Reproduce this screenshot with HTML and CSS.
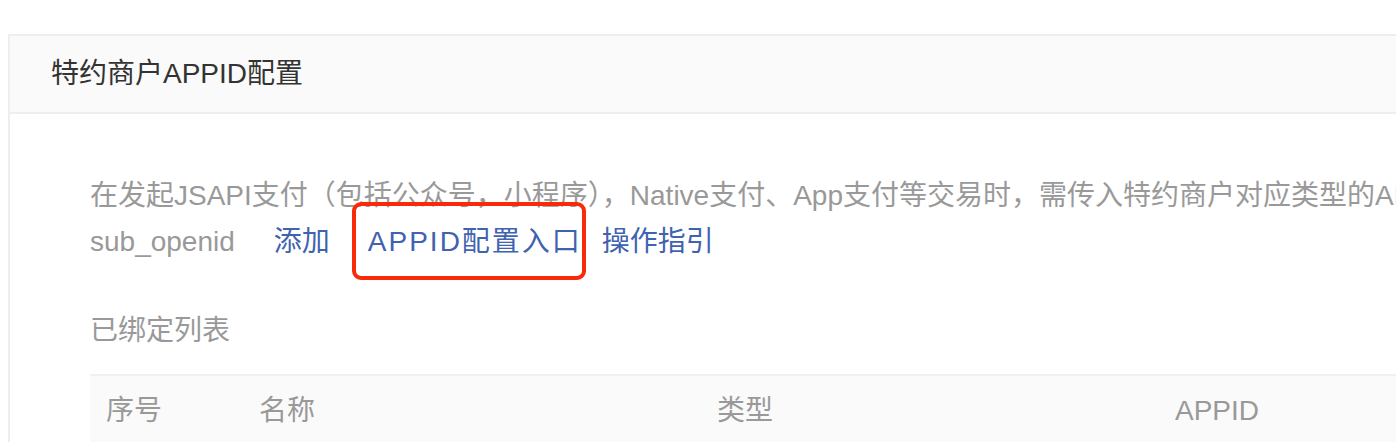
FILE: index.html
```html
<!DOCTYPE html>
<html lang="zh-CN">
<head>
  <meta charset="UTF-8">
  <meta name="viewport" content="width=device-width, initial-scale=1.0">
  <title>特约商户APPID配置</title>
  <link rel="stylesheet" href="styles.css">
</head>
<body>
  <div class="card">
    <div class="card-header">特约商户APPID配置</div>
    <div class="card-body">
      <div class="desc-line">在发起JSAPI支付（包括公众号，小程序），Native支付、App支付等交易时，需传入特约商户对应类型的APPID，用于获取用户在特约商户下的</div>
      <div class="desc-actions">
        <span class="desc-word">sub_openid</span>
        <a class="link link-add" href="#">添加</a>
        <span class="mark">
          <a class="link link-entry" href="#">APPID配置入口</a>
        </span>
        <a class="link link-guide" href="#">操作指引</a>
      </div>

      <div class="list-title">已绑定列表</div>
      <div class="table">
        <div class="table-head">
          <div class="cell">序号</div>
          <div class="cell">名称</div>
          <div class="cell">类型</div>
          <div class="cell">APPID</div>
        </div>
      </div>
    </div>
  </div>
</body>
</html>
```

FILE: styles.css
```css
body {
  margin: 0;
  background: #fff;
  font-family: "Liberation Sans", "Noto Sans CJK SC", sans-serif;
  overflow: hidden;
}
.card {
  margin: 34px 0 0 8px;
  width: 1600px;
  border: 2px solid #eee;
  border-right: none;
}
.card-header {
  height: 76px;
  line-height: 76px;
  padding-left: 41px;
  background: #fafafa;
  border-bottom: 2px solid #eee;
  font-size: 28px;
  color: #333;
}
.card-body {
  padding: 59px 0 0 80px;
  font-size: 28px;
  line-height: 46px;
  color: #999;
}
.desc-line {
  white-space: nowrap;
}
.desc-actions {
  display: flex;
  align-items: center;
}
.link {
  color: #4062b0;
  text-decoration: none;
}
.link-add {
  margin-left: 39px;
}
.mark {
  position: relative;
  margin-left: 38px;
}
.mark::after {
  content: "";
  position: absolute;
  left: -16px;
  top: -17px;
  right: -4px;
  bottom: -15px;
  border: 4px solid #f82a0a;
  border-radius: 9px;
}
.link-entry {
  letter-spacing: 2px;
}
.link-guide {
  margin-left: 20px;
}
.list-title {
  margin-top: 43px;
}
.table {
  margin-top: 20px;
  border-top: 2px solid #f0f0f0;
  background: #fafafa;
}
.table-head {
  display: grid;
  grid-template-columns: 153px 458px 458px 458px;
  height: 70px;
  align-items: center;
}
.cell {
  padding-left: 16px;
}
```
